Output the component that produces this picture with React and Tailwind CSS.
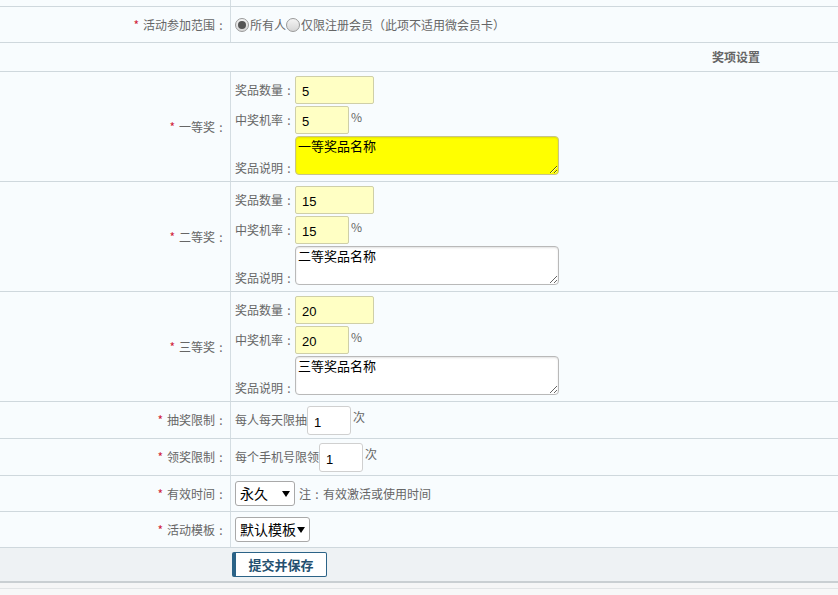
import React from 'react';

const font = { fontFamily: '"Noto Sans CJK SC", "Liberation Sans", sans-serif' };
const latin = { fontFamily: '"Liberation Sans", sans-serif' };

function Colon() {
  return <span className="inline-block w-[12px] text-center">:</span>;
}

function Label({ text }) {
  return (
    <div className="w-[231px] shrink-0 flex items-center justify-end pr-[3px] border-r border-[#d4dde2] text-[12px] text-[#666] whitespace-nowrap">
      <span className="text-[#d0213a] mr-[4px]">*</span>
      <span>{text}</span>
      <Colon />
    </div>
  );
}

function Row({ label, children, h = 'h-[37px]' }) {
  return (
    <div className={`flex ${h} border-b border-[#cfd8dd]`}>
      <Label text={label} />
      <div className="flex-1 flex items-center pl-[4px] text-[12px] text-[#666] whitespace-nowrap">{children}</div>
    </div>
  );
}

function Field({ value, w }) {
  return (
    <input
      readOnly
      value={value}
      className={`h-[28px] ${w} bg-[#ffffc4] border border-[#cfcfa8] rounded-[2px] px-[6px] pt-[3px] text-[13px] text-black outline-none`}
      style={latin}
    />
  );
}

function SubLabel({ text, className = '' }) {
  return (
    <span className={`w-[60px] shrink-0 whitespace-nowrap ${className}`}>
      {text}
      <Colon />
    </span>
  );
}

function Prize({ label, count, rate, desc, hot }) {
  return (
    <div className="flex h-[110px] border-b border-[#cfd8dd]">
      <Label text={label} />
      <div className="flex-1 flex flex-col pl-[4px] pt-[4px] gap-[2px] text-[12px] text-[#666]">
        <div className="flex items-center">
          <SubLabel text="奖品数量" />
          <Field value={count} w="w-[79px]" />
        </div>
        <div className="flex items-start">
          <SubLabel text="中奖机率" className="mt-[5px]" />
          <Field value={rate} w="w-[54px]" />
          <span className="ml-[2px] mt-[2px]">%</span>
        </div>
        <div className="flex items-end">
          <SubLabel text="奖品说明" className="mb-[-2px]" />
          <textarea
            readOnly
            value={desc}
            className={`w-[264px] h-[39px] ${hot ? 'bg-[#ffff00] border-[#c8c48a]' : 'bg-white border-[#b9b9b9]'} border rounded-[4px] px-[2px] py-0 text-[13px] leading-[18px] text-black outline-none resize-y shadow-[inset_0_1px_2px_rgba(0,0,0,0.12)]`}
            style={font}
          />
        </div>
      </div>
    </div>
  );
}

function Select({ value, w }) {
  return (
    <div className={`h-[25px] ${w} bg-white border border-[#a9a9a9] rounded-[3px] flex items-center justify-between pl-[4px] pr-[4px] text-[14px] text-black whitespace-nowrap`}>
      <span>{value}</span>
      <svg width="8" height="6" viewBox="0 0 8 6"><path d="M0 0h8L4 6z" fill="#000" /></svg>
    </div>
  );
}

function Radio({ checked }) {
  return (
    <span className="w-[14px] h-[14px] shrink-0 rounded-full border border-[#9a9a9a] bg-gradient-to-b from-[#f4f4f4] to-[#d6d6d6] flex items-center justify-center">
      {checked && <span className="w-[8px] h-[8px] rounded-full bg-[#555]" />}
    </span>
  );
}

function Times({ text }) {
  return (
    <>
      <span>{text}</span>
      <input readOnly value="1" className="h-[29px] w-[44px] bg-white border border-[#d0d0d0] rounded-[3px] px-[6px] pt-[4px] text-[13px] text-black outline-none" style={latin} />
      <span className="ml-[2px] mb-[6px]">次</span>
    </>
  );
}

export default function App() {
  return (
    <div className="w-[838px] h-[595px] bg-[#f8fcfe] overflow-hidden" style={font}>
      <div className="flex h-[7px] border-b border-[#cfd8dd]">
        <div className="w-[231px] border-r border-[#d4dde2]" />
      </div>
      <Row label="活动参加范围" h="h-[36px]">
        <Radio checked />
        <span className="ml-[1px]">所有人</span>
        <Radio />
        <span className="ml-[1px]">仅限注册会员（此项不适用微会员卡）</span>
      </Row>
      <div className="h-[29px] border-b border-[#cfd8dd] flex items-center justify-end pr-[78px] text-[12px] font-bold text-[#666]">
        奖项设置
      </div>
      <Prize label="一等奖" count="5" rate="5" desc="一等奖品名称" hot />
      <Prize label="二等奖" count="15" rate="15" desc="二等奖品名称" />
      <Prize label="三等奖" count="20" rate="20" desc="三等奖品名称" />
      <Row label="抽奖限制">
        <Times text="每人每天限抽" />
      </Row>
      <Row label="领奖限制">
        <Times text="每个手机号限领" />
      </Row>
      <Row label="有效时间" h="h-[36px]">
        <Select value="永久" w="w-[60px]" />
        <span className="ml-[4px]">注<Colon />有效激活或使用时间</span>
      </Row>
      <Row label="活动模板" h="h-[36px]">
        <Select value="默认模板" w="w-[75px]" />
      </Row>
      <div className="h-[35px] bg-[#eef2f4] border-b-2 border-[#c9cfd2] flex items-center pl-[232px]">
        <button className="h-[25px] w-[95px] bg-white border border-[#2b6387] border-l-[4px] rounded-[2px] text-[13px] font-bold text-[#24506f]">
          提交并保存
        </button>
      </div>
      <div className="h-[6px] bg-[#f5f6f6] border-b border-[#e2e5e6]" />
      <div className="h-[8px] bg-[#f7f8f8]" />
    </div>
  );
}
